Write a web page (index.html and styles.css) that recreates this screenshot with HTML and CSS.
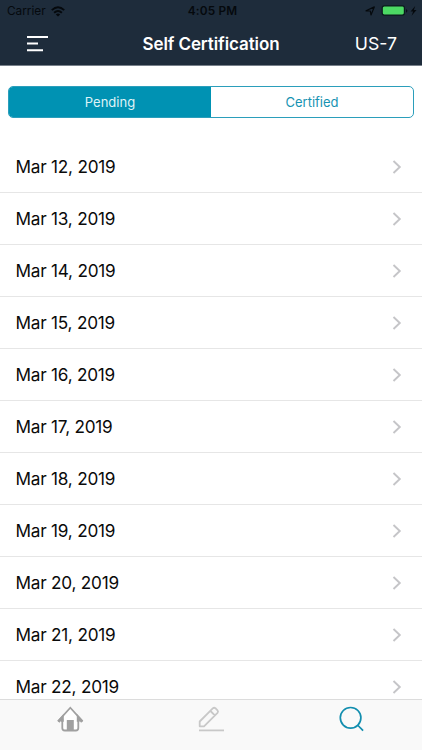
FILE: index.html
```html
<!DOCTYPE html>
<html lang="en">
<head>
<meta charset="utf-8">
<title>Self Certification</title>
<link rel="stylesheet" href="styles.css">
</head>
<body>
<div class="app">
  <header class="header">
    <div class="status">
      <div class="status-left">
        <span class="carrier">Carrier</span>
        <svg class="wifi" width="14" height="11" viewBox="0 0 14 11"><g fill="none" stroke="#05090d" stroke-width="1.9"><path d="M.8 4.1Q7-1.7 13.2 4.1"/><path d="M3.1 6.7Q7 3.1 10.9 6.7"/></g><path fill="#05090d" d="M4.8 8.4Q7 6.5 9.2 8.4L7 10.6z"/></svg>
      </div>
      <span class="time">4:05 PM</span>
      <div class="status-right">
        <svg width="54" height="12" viewBox="0 0 54 12"><path d="M2 5.8 10.3 1.9 7 10 6.3 6z" fill="none" stroke="#05090d" stroke-width="1.2" stroke-linejoin="round"/><rect x="18.2" y=".9" width="22.2" height="9.2" rx="2" fill="#4cd964" stroke="#0a1b1c" stroke-width="1.2"/><path d="M42.2 3.9q2.4 1.8 0 3.8z" fill="#05090d"/><path d="M51.2 1 46.6 6.4h2.5L47.6 10.8 52.5 5h-2.6z" fill="#05090d"/></svg>
      </div>
    </div>
    <div class="navbar">
      <svg class="menu" width="22" height="18" viewBox="0 0 22 18"><path d="M0 2h21M0 8.6h11M0 15.2h16" stroke="#fff" stroke-width="2"/></svg>
      <h1 class="title">Self Certification</h1>
      <span class="region">US-7</span>
    </div>
  </header>
  <div class="segments">
    <div class="segment active">Pending</div>
    <div class="segment">Certified</div>
  </div>
  <main class="list">
    <div class="row"><span>Mar 12, 2019</span><svg class="chevron" width="10" height="14" viewBox="0 0 10 14"><path d="m1.5 1 6.3 6-6.3 6"/></svg></div>
    <div class="row"><span>Mar 13, 2019</span><svg class="chevron" width="10" height="14" viewBox="0 0 10 14"><path d="m1.5 1 6.3 6-6.3 6"/></svg></div>
    <div class="row"><span>Mar 14, 2019</span><svg class="chevron" width="10" height="14" viewBox="0 0 10 14"><path d="m1.5 1 6.3 6-6.3 6"/></svg></div>
    <div class="row"><span>Mar 15, 2019</span><svg class="chevron" width="10" height="14" viewBox="0 0 10 14"><path d="m1.5 1 6.3 6-6.3 6"/></svg></div>
    <div class="row"><span>Mar 16, 2019</span><svg class="chevron" width="10" height="14" viewBox="0 0 10 14"><path d="m1.5 1 6.3 6-6.3 6"/></svg></div>
    <div class="row"><span>Mar 17, 2019</span><svg class="chevron" width="10" height="14" viewBox="0 0 10 14"><path d="m1.5 1 6.3 6-6.3 6"/></svg></div>
    <div class="row"><span>Mar 18, 2019</span><svg class="chevron" width="10" height="14" viewBox="0 0 10 14"><path d="m1.5 1 6.3 6-6.3 6"/></svg></div>
    <div class="row"><span>Mar 19, 2019</span><svg class="chevron" width="10" height="14" viewBox="0 0 10 14"><path d="m1.5 1 6.3 6-6.3 6"/></svg></div>
    <div class="row"><span>Mar 20, 2019</span><svg class="chevron" width="10" height="14" viewBox="0 0 10 14"><path d="m1.5 1 6.3 6-6.3 6"/></svg></div>
    <div class="row"><span>Mar 21, 2019</span><svg class="chevron" width="10" height="14" viewBox="0 0 10 14"><path d="m1.5 1 6.3 6-6.3 6"/></svg></div>
    <div class="row"><span>Mar 22, 2019</span><svg class="chevron" width="10" height="14" viewBox="0 0 10 14"><path d="m1.5 1 6.3 6-6.3 6"/></svg></div>
  </main>
  <nav class="tabbar">
    <div class="tab"><svg width="28" height="28" viewBox="0 0 28 28"><path d="M6.2 12V22q0 2.6 2.6 2.6h11q2.6 0 2.6-2.6V12L14.3 3z" fill="#fff"/><g fill="none" stroke="#a0a0a0"><path d="M2 15.4 14.3 1.8l12.3 13.6" stroke-width="1.7"/><path d="M2.4 15.8 6.4 11.4v4.4M26.2 15.8 22.2 11.4v4.4" stroke-width="2.8"/><path d="M6.3 13v9q0 2.5 2.5 2.5h11q2.5 0 2.5-2.5v-9" stroke-width="1.8"/></g><path d="M10.8 14h7v10.8h-7z" fill="#a0a0a0"/></svg></div>
    <div class="tab"><svg width="28" height="28" viewBox="0 0 28 28"><g fill="none" stroke="#c8c8c8" stroke-width="1.8" stroke-linejoin="round"><path d="M2.7 20.3v-4.8L16 2.2q1.2-1 2.4 0l2.1 2.2q1.1 1.2 0 2.4L7 20.3zM13.5 5l4.3 4.4"/><path d="M2 24.4h25"/></g></svg></div>
    <div class="tab"><svg width="28" height="28" viewBox="0 0 28 28"><g fill="none" stroke="#128eaf" stroke-width="1.7"><circle cx="12.6" cy="11.8" r="10.3"/><path d="m19.5 19 5.6 5.6"/></g></svg></div>
  </nav>
</div>
</body>
</html>
```
FILE: styles.css
```css
* { box-sizing: border-box; }
body { margin: 0; font-family: Inter, "Liberation Sans", sans-serif; background: #fff; }
.app { width: 422px; height: 750px; display: flex; flex-direction: column; overflow: hidden; }
svg { display: block; }
.header { height: 66px; flex: none; background: #1e2c3b; border-bottom: 1px solid #77808a; color: #fff; }
.status { height: 22px; display: grid; grid-template-columns: 1fr auto 1fr; align-items: center; padding: 0 4px 0 7px; color: #05090d; }
.status-left { display: flex; align-items: center; gap: 5px; font-size: 11.8px; }
.status-right { display: flex; justify-content: flex-end; }
.time { font-size: 11.8px; font-weight: 600; letter-spacing: .2px; }
.navbar { height: 43px; display: grid; grid-template-columns: 1fr auto 1fr; align-items: center; padding: 0 25px 0 25px; }
.menu { margin-left: 2px; }
.title { margin: 0; font-size: 17px; font-weight: 600; letter-spacing: -.1px; line-height: 22px; }
.region { justify-self: end; font-size: 17.7px; line-height: 22px; }
.segments { flex: none; height: 32px; margin: 20px 8px 23px; display: flex; border: 1px solid #2b9ebb; border-radius: 5px; overflow: hidden; }
.segment { flex: 1; display: flex; align-items: center; justify-content: center; padding-bottom: 1px; font-size: 13px; color: #1693b2; }
.segment.active { background: #0092b3; color: #dff3f7; }
.list { flex: 1; min-height: 0; overflow: hidden; }
.row { height: 52px; display: flex; align-items: center; justify-content: space-between; padding: 0 20px 0 15.5px; border-bottom: 1px solid #e6e6e6; font-size: 17.2px; letter-spacing: -.23px; color: #0a0a0a; }
.row span { padding-bottom: 1px; }
.chevron { fill: none; stroke: #c5c5c8; stroke-width: 1.9; }
.tabbar { flex: none; height: 51px; display: grid; grid-template-columns: repeat(3, 1fr); border-top: 1px solid #dcdcdc; background: #f9f9f9; }
.tab { display: flex; justify-content: center; padding-top: 6px; }
```
